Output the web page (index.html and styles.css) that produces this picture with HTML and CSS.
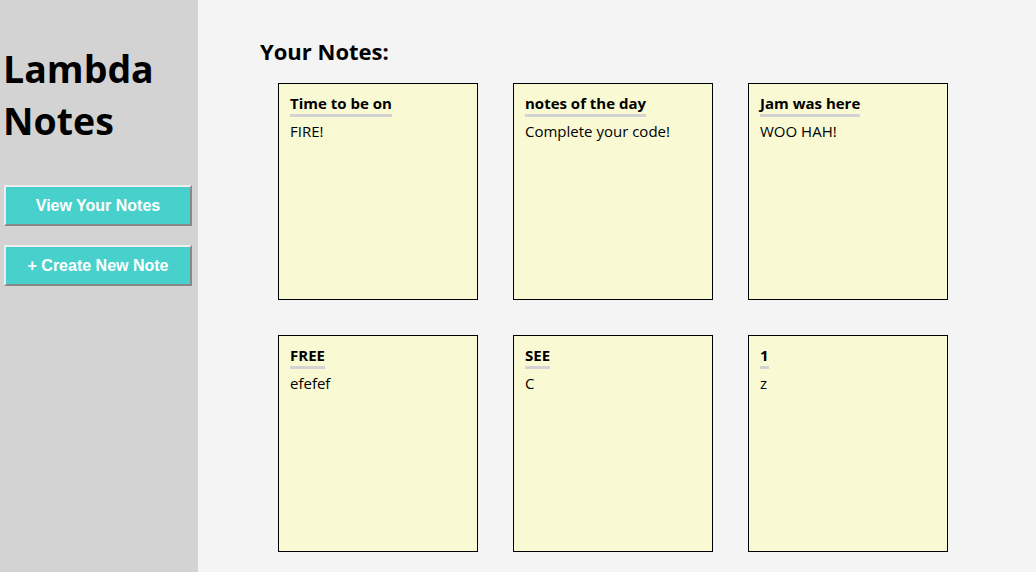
FILE: index.html
```html
<!DOCTYPE html>
<html>
<head>
<meta charset="utf-8">
<link rel="stylesheet" href="styles.css">
</head>
<body>
<div class="app">
  <aside class="sidebar">
    <h1 class="brand">Lambda Notes</h1>
    <button class="nav-btn">View Your Notes</button>
    <button class="nav-btn">+ Create New Note</button>
  </aside>
  <main class="main">
    <h2 class="heading">Your Notes:</h2>
    <div class="grid">
      <div class="card"><h3 class="title">Time to be on</h3><p class="body">FIRE!</p></div>
      <div class="card"><h3 class="title">notes of the day</h3><p class="body">Complete your code!</p></div>
      <div class="card"><h3 class="title">Jam was here</h3><p class="body">WOO HAH!</p></div>
      <div class="card"><h3 class="title">FREE</h3><p class="body">efefef</p></div>
      <div class="card"><h3 class="title">SEE</h3><p class="body">C</p></div>
      <div class="card"><h3 class="title">1</h3><p class="body">z</p></div>
    </div>
  </main>
</div>
</body>
</html>
```
FILE: styles.css
```css
html, body {
  margin: 0;
  padding: 0;
  height: 100%;
}
body {
  font-family: "Open Sans", "Noto Sans", sans-serif;
  background: #f4f4f4;
  overflow: hidden;
}
.app {
  display: flex;
  min-height: 100%;
}
.sidebar {
  width: 198px;
  flex-shrink: 0;
  background: #d3d3d3;
  padding: 0 6px 0 4px;
  box-sizing: border-box;
  display: flex;
  flex-direction: column;
}
.brand {
  margin: 43px 0 38px -1px;
  font-size: 37.5px;
  line-height: 52px;
  font-weight: 700;
  color: #000;
}
.nav-btn {
  display: block;
  width: 188px;
  height: 41px;
  margin: 0 0 19px 0;
  background: #48d1cc;
  color: #fff;
  font-family: "Liberation Sans", Arial, sans-serif;
  font-weight: 700;
  font-size: 16px;
  border: 2px solid;
  border-color: #eeeeee #888888 #888888 #eeeeee;
  padding: 0;
  cursor: pointer;
}
.main {
  flex: 1;
  padding: 36px 0 0 62px;
}
.heading {
  margin: 0 0 17px 0;
  font-size: 22px;
  line-height: 30px;
  font-weight: 700;
}
.grid {
  display: grid;
  grid-template-columns: repeat(3, 200px);
  column-gap: 35px;
  row-gap: 35px;
  margin-left: 18px;
}
.card {
  box-sizing: border-box;
  height: 217px;
  background: #f9f9d4;
  border: 1px solid #000;
  padding: 8px 11px;
}
.title {
  display: inline-block;
  margin: 0;
  font-size: 15px;
  line-height: 21px;
  font-weight: 700;
  border-bottom: 3px solid #d3d3d3;
}
.body {
  margin: 3px 0 0 0;
  font-size: 15px;
  line-height: 22px;
}
```
